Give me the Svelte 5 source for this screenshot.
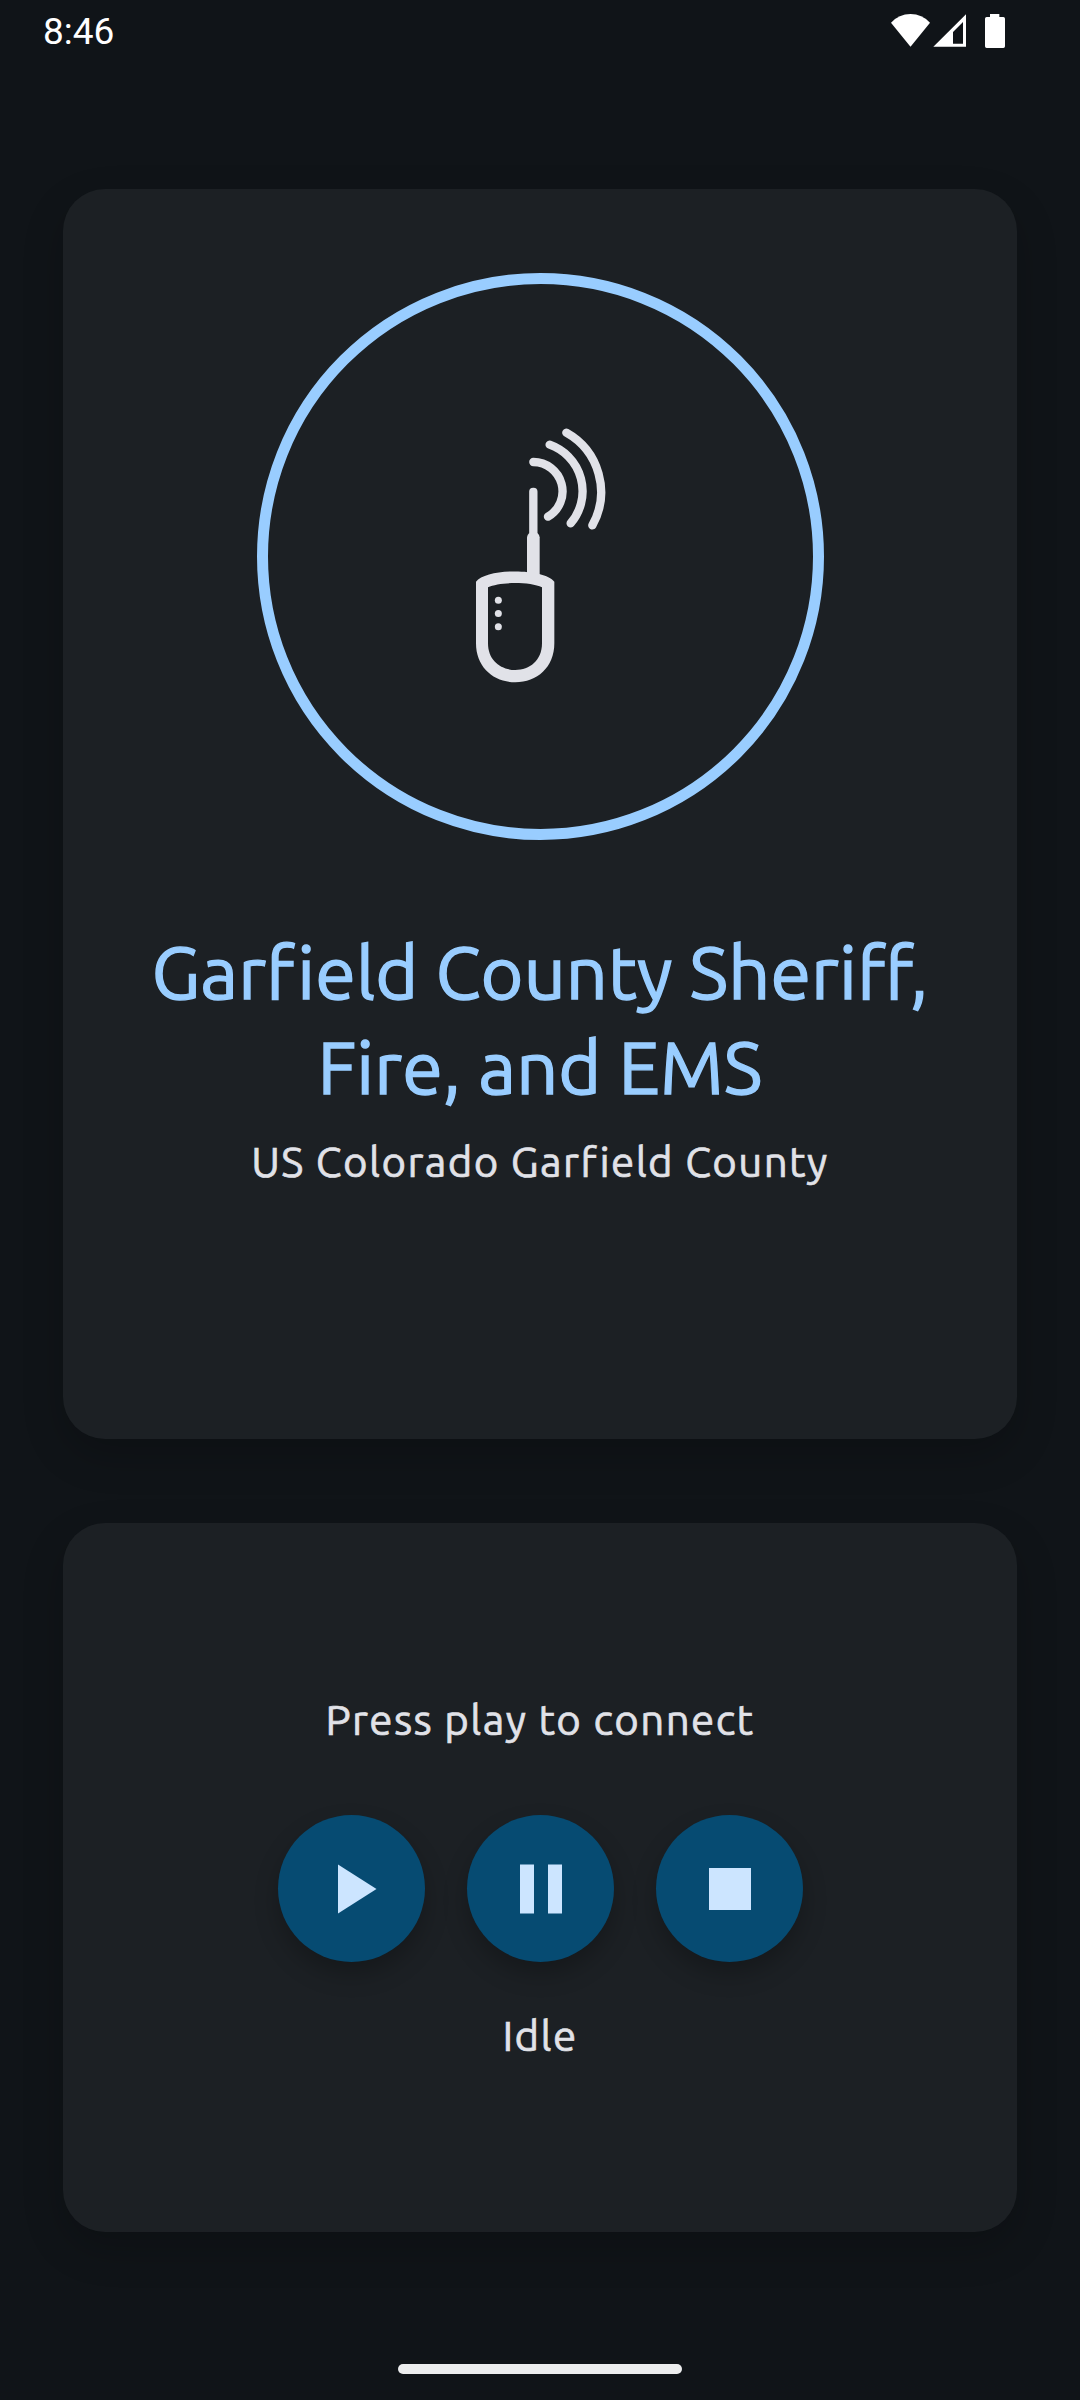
<script lang="ts">
  let time = "8:46";

  let feed = {
    name: "Garfield County Sheriff, Fire, and EMS",
    region: "US Colorado Garfield County",
  };

  let message = $state("Press play to connect");
  let status = $state("Idle");

  const controls = [
    { label: "Play", path: "M8 5v14l11-7z", onclick: () => (status = "Playing") },
    {
      label: "Pause",
      path: "M6 19h4V5H6v14zm8-14v14h4V5h-4z",
      onclick: () => (status = "Paused"),
    },
    { label: "Stop", path: "M6 6h12v12H6z", onclick: () => (status = "Idle") },
  ];
</script>

<div class="screen">
  <header class="status-bar">
    <span class="clock">{time}</span>
    <svg class="status-icons" viewBox="93 42 342 102" aria-hidden="true">
      <path d="M93 68Q117 42 151.500 42T210 68L151.500 140Z" />
      <path
        fill-rule="evenodd"
        d="M318 43V140H220ZM309 66L279 96V131H309Z"
      />
      <path
        d="M390 42H418V51H430Q435 51 435 56V139Q435 144 430 144H380Q375 144 375 139V56Q375 51 380 51H390Z"
      />
    </svg>
  </header>

  <main class="content">
    <section class="card feed-card">
      <div class="artwork">
        <svg class="scanner" viewBox="1 21 540 900" aria-hidden="true">
          <!-- signal waves -->
          <g class="waves">
            <path d="M251 186A88 88 0 0 1 295 350" />
            <path d="M300 134A148 148 0 0 1 363 370" />
            <path d="M350 98A204 204 0 0 1 428 376" />
          </g>
          <!-- antenna -->
          <rect x="238.500" y="263" width="25" height="160" rx="12" />
          <path d="M238 400H264Q270 406 270 412V530H232V412Q232 406 238 400Z" />
          <!-- body -->
          <path
            fill-rule="evenodd"
            d="M79 545C110 504 283 504 314 545V730C314 802 262 847 197 847S79 802 79 730ZM115 562C150 545 242 545 277 562V730C277 782 240 810 197 810S115 782 115 730Z"
          />
          <circle cx="146" cy="601" r="10.500" />
          <circle cx="146" cy="640.500" r="10.500" />
          <circle cx="146" cy="680" r="10.500" />
        </svg>
      </div>
      <h1 class="feed-name">{feed.name}</h1>
      <p class="text feed-region">{feed.region}</p>
    </section>

    <section class="card player-card">
      <p class="text">{message}</p>
      <div class="controls">
        {#each controls as control}
          <button
            class="control"
            aria-label={control.label}
            onclick={control.onclick}
          >
            <svg viewBox="0 0 24 24"><path d={control.path} /></svg>
          </button>
        {/each}
      </div>
      <p class="text">{status}</p>
    </section>
  </main>

  <footer class="nav-bar">
    <div class="home-handle"></div>
  </footer>
</div>

<style>
  :global(body) {
    margin: 0;
    background: #101418;
  }

  .screen {
    --surface: #1c2024;
    --on-surface: #e1e2e8;
    --primary: #99cdff;
    --primary-container: #064b72;
    --on-primary-container: #cce5ff;

    box-sizing: border-box;
    display: flex;
    flex-direction: column;
    width: 1080px;
    height: 2400px;
    overflow: hidden;
    background: #101418;
    color: var(--on-surface);
    font-family: Ubuntu, "Open Sans", sans-serif;
  }

  /* Status bar */
  .status-bar {
    box-sizing: border-box;
    display: flex;
    justify-content: space-between;
    align-items: center;
    height: 63px;
    padding: 0 75px 0 43px;
  }

  .clock {
    font-family: Roboto, sans-serif;
    font-size: 37px;
    line-height: 42px;
    color: #fff;
  }

  .status-icons {
    width: 114px;
    height: 34px;
    margin-bottom: 1px;
    fill: #fff;
  }

  /* Cards */
  .content {
    flex: 1;
    display: flex;
    flex-direction: column;
    gap: 84px;
    padding: 126px 63px 0;
  }

  .card {
    box-sizing: border-box;
    display: flex;
    flex-direction: column;
    align-items: center;
    border-radius: 42px;
    background: var(--surface);
    box-shadow: 0 16px 42px rgba(0, 0, 0, 0.2);
  }

  .feed-card {
    height: 1250px;
    padding: 84px 63px 0;
  }

  .player-card {
    height: 709px;
    justify-content: center;
  }

  .artwork {
    box-sizing: border-box;
    display: flex;
    align-items: center;
    justify-content: center;
    width: 567px;
    height: 567px;
    border: 11px solid var(--primary);
    border-radius: 50%;
  }

  .scanner {
    width: 180px;
    height: 300px;
    fill: var(--on-surface);
  }

  .waves {
    fill: none;
    stroke: var(--on-surface);
    stroke-width: 25;
    stroke-linecap: round;
  }

  .feed-name {
    margin: 85px 0 0;
    font-size: 73.5px;
    font-weight: 400;
    line-height: 94.5px;
    letter-spacing: 0.15px;
    text-align: center;
    color: var(--primary);
    -webkit-text-stroke: 1.4px var(--primary);
  }

  .text {
    margin: 0;
    font-size: 42px;
    line-height: 63px;
    letter-spacing: 1.43px;
    text-align: center;
    -webkit-text-stroke: 0.7px var(--on-surface);
  }

  .feed-region {
    margin-top: 16px;
  }

  /* Player controls */
  .controls {
    display: flex;
    gap: 42px;
    margin: 64px 0 42px;
  }

  .control {
    display: flex;
    align-items: center;
    justify-content: center;
    width: 147px;
    height: 147px;
    padding: 0 0 0 1px;
    border: none;
    border-radius: 50%;
    background: var(--primary-container);
    box-shadow: 0 12px 24px rgba(0, 0, 0, 0.24);
    cursor: pointer;
  }

  .control svg {
    width: 84px;
    height: 84px;
    fill: var(--on-primary-container);
  }

  /* Gesture bar */
  .nav-bar {
    display: flex;
    justify-content: center;
    padding-bottom: 26px;
  }

  .home-handle {
    width: 284px;
    height: 10px;
    border-radius: 5px;
    background: #ecedee;
  }
</style>
